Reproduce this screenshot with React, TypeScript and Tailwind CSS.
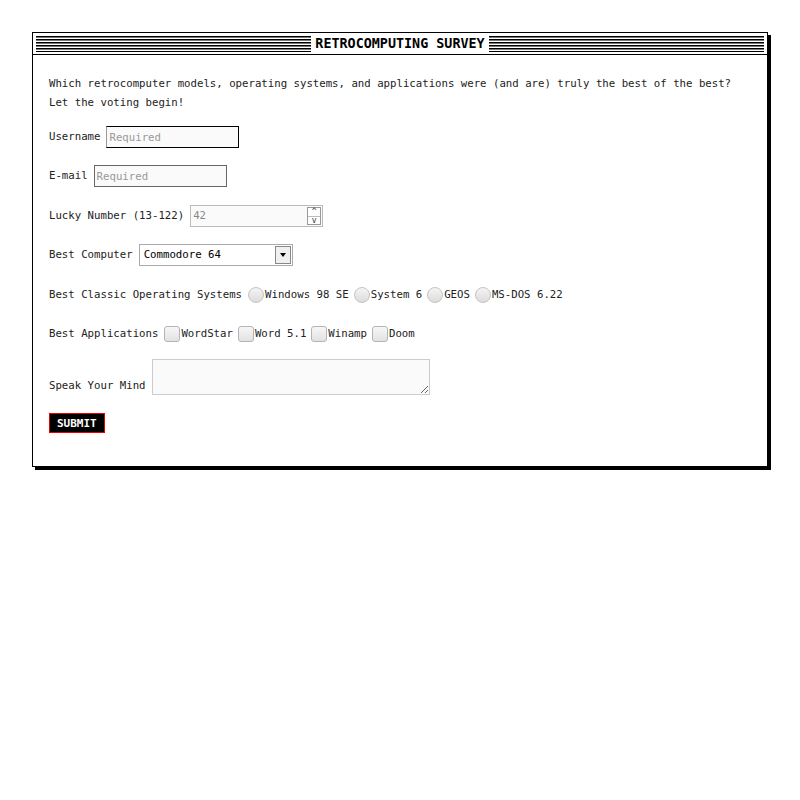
const Stripes = () => (
  <div className="flex-1 h-[16px] bg-[repeating-linear-gradient(to_bottom,#000_0px,#000_1px,#777_1px,#777_2px,#fff_2px,#fff_3px)]" />
);

const Radio = ({ label }: { label: string }) => (
  <label className="flex items-center mr-[5px]">
    <span className="w-[16px] h-[16px] rounded-full border border-[#c4c4c4] bg-[linear-gradient(#f4f4f4,#dcdcdc)] mr-[1px]" />
    <span>{label}</span>
  </label>
);

const Check = ({ label }: { label: string }) => (
  <label className="flex items-center mr-[5px]">
    <span className="w-[16px] h-[16px] rounded-[3px] border border-[#b4b4b4] bg-[linear-gradient(#f6f6f6,#e2e2e2)] mr-[1px]" />
    <span>{label}</span>
  </label>
);

export default function App() {
  return (
    <div className="p-[32px] font-['DejaVu_Sans_Mono',monospace] text-[10.7px] text-[#222]">
      <div className="border border-black bg-white shadow-[3px_3px_0_#000] pb-[33px]">
        <div className="flex items-center gap-[4px] px-[3px] h-[22px] border-b border-black">
          <Stripes />
          <span className="font-bold text-[13.4px] text-black leading-none">RETROCOMPUTING SURVEY</span>
          <Stripes />
        </div>
        <div className="px-[16px] pt-[19px]">
          <p className="leading-[19px]">
            Which retrocomputer models, operating systems, and applications were (and are) truly the best of the best?
            <br />
            Let the voting begin!
          </p>

          <div className="flex items-center gap-[6px] mt-[14px] h-[22px]">
            <span>Username</span>
            <input
              placeholder="Required"
              className="w-[133px] h-[22px] border border-black border-l-[#999] bg-[#fafafa] px-[2px] outline-none placeholder:text-[#999]"
            />
          </div>

          <div className="flex items-center gap-[6px] mt-[17px] h-[22px]">
            <span>E-mail</span>
            <input
              placeholder="Required"
              className="w-[133px] h-[22px] border border-[#666] bg-[#fafafa] px-[2px] outline-none placeholder:text-[#999]"
            />
          </div>

          <div className="flex items-center gap-[6px] mt-[18px] h-[22px]">
            <span>Lucky Number (13-122)</span>
            <div className="w-[133px] h-[22px] border border-[#bbb] bg-[#fafafa] flex items-center justify-between pl-[2px] pr-[1px]">
              <span className="text-[#888]">42</span>
              <div className="flex flex-col w-[14px] h-[18px] border border-[#999] bg-white text-[8px] leading-none text-[#333]">
                <span className="flex-1 flex items-center justify-center border-b border-[#bbb]">^</span>
                <span className="flex-1 flex items-center justify-center">v</span>
              </div>
            </div>
          </div>

          <div className="flex items-center gap-[6px] mt-[17px] h-[22px]">
            <span>Best Computer</span>
            <div className="w-[154px] h-[22px] border border-[#aaa] bg-white flex items-center justify-between pl-[4px] pr-[1px]">
              <span className="text-black">Commodore 64</span>
              <div className="w-[16px] h-[18px] border border-[#888] bg-[#f0f0f0] flex items-center justify-center">
                <span className="w-0 h-0 border-l-[3px] border-r-[3px] border-t-[4px] border-l-transparent border-r-transparent border-t-black" />
              </div>
            </div>
          </div>

          <div className="flex items-center mt-[18px] h-[22px]">
            <span className="mr-[6px]">Best Classic Operating Systems</span>
            <Radio label="Windows 98 SE" />
            <Radio label="System 6" />
            <Radio label="GEOS" />
            <Radio label="MS-DOS 6.22" />
          </div>

          <div className="flex items-center mt-[17px] h-[22px]">
            <span className="mr-[6px]">Best Applications</span>
            <Check label="WordStar" />
            <Check label="Word 5.1" />
            <Check label="Winamp" />
            <Check label="Doom" />
          </div>

          <div className="flex items-end gap-[6px] mt-[14px]">
            <span className="mb-[1px]">Speak Your Mind</span>
            <textarea className="w-[278px] h-[36px] border border-[#ccc] bg-[#fafafa] outline-none resize-y" />
          </div>

          <button className="mt-[18px] h-[20px] px-[7px] bg-black border border-[#e00] text-white font-bold text-[11px] leading-none">
            SUBMIT
          </button>
        </div>
      </div>
    </div>
  );
}
